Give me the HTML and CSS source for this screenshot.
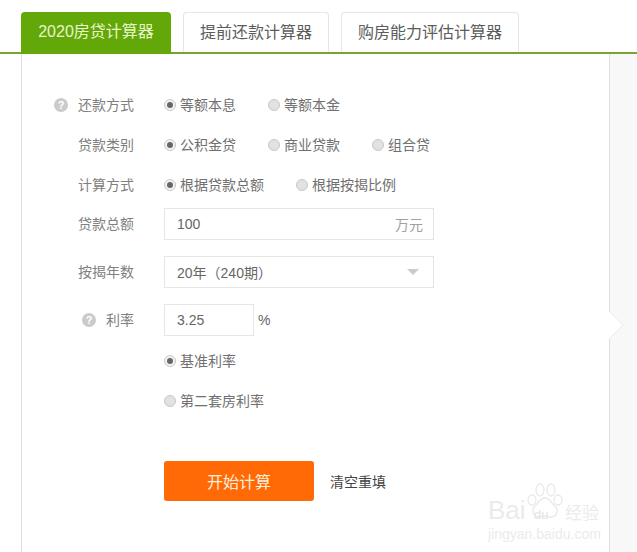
FILE: index.html
```html
<!DOCTYPE html>
<html lang="zh-CN">
<head>
<meta charset="utf-8">
<title>房贷计算器</title>
<link rel="stylesheet" href="styles.css">
</head>
<body>
<nav class="tabs">
  <a class="tab tab-active">2020房贷计算器</a>
  <a class="tab tab-second">提前还款计算器</a>
  <a class="tab tab-third">购房能力评估计算器</a>
</nav>
<div class="main">
  <section class="panel">
    <div class="row radio-row">
      <div class="label"><span class="help">?</span>还款方式</div>
      <div class="options">
        <span class="opt"><i class="radio on"></i>等额本息</span>
        <span class="opt"><i class="radio"></i>等额本金</span>
      </div>
    </div>
    <div class="row radio-row">
      <div class="label">贷款类别</div>
      <div class="options">
        <span class="opt"><i class="radio on"></i>公积金贷</span>
        <span class="opt"><i class="radio"></i>商业贷款</span>
        <span class="opt"><i class="radio"></i>组合贷</span>
      </div>
    </div>
    <div class="row radio-row">
      <div class="label">计算方式</div>
      <div class="options">
        <span class="opt"><i class="radio on"></i>根据贷款总额</span>
        <span class="opt"><i class="radio"></i>根据按揭比例</span>
      </div>
    </div>
    <div class="row field-row first-field">
      <div class="label">贷款总额</div>
      <div class="box box-wide"><span>100</span><span class="unit">万元</span></div>
    </div>
    <div class="row field-row">
      <div class="label">按揭年数</div>
      <div class="box box-wide"><span>20年（240期）</span><i class="caret"></i></div>
    </div>
    <div class="row field-row">
      <div class="label"><span class="help">?</span>利率</div>
      <div class="box box-small"><span>3.25</span></div>
      <span class="percent">%</span>
    </div>
    <div class="row radio-row after-field">
      <div class="label"></div>
      <div class="options"><span class="opt"><i class="radio on"></i>基准利率</span></div>
    </div>
    <div class="row radio-row">
      <div class="label"></div>
      <div class="options"><span class="opt"><i class="radio"></i>第二套房利率</span></div>
    </div>
    <div class="row actions">
      <div class="label"></div>
      <button class="submit" type="button">开始计算</button>
      <a class="reset">清空重填</a>
    </div>
  </section>
  <aside class="side"></aside>
  <svg class="chevron" width="16" height="30" viewBox="0 0 16 30" aria-hidden="true">
    <path d="M0 1 L14 15 L0 29 Z" fill="#fff"/>
    <path d="M0 1 L14 15 L0 29" fill="none" stroke="#ececec" stroke-width="1"/>
  </svg>
</div>
<div class="watermark">
  <svg class="paw" width="36" height="37" viewBox="0 0 36 37" aria-hidden="true">
    <g fill="#fff" stroke="#e9e9e9" stroke-width="1.3">
      <ellipse cx="13" cy="7" rx="4" ry="6"/>
      <ellipse cx="24" cy="7" rx="4" ry="6"/>
      <ellipse cx="5" cy="17" rx="4" ry="5"/>
      <ellipse cx="31" cy="17" rx="4" ry="5"/>
      <path d="M18 15c-5 0-6 5-10 8-4 4-2 11 4 11 3 0 4-1 6-1s3 1 6 1c6 0 8-7 4-11-4-3-5-8-10-8z"/>
    </g>
  </svg>
  <div class="wm-top"><span class="wm-bai">Bai</span><span class="wm-du">du</span><span class="wm-cn">经验</span></div>
  <div class="wm-url">jingyan.baidu.com</div>
</div>
</body>
</html>
```
FILE: styles.css
```css
* { box-sizing: border-box; }
html, body { margin: 0; height: 552px; overflow: hidden; background: #fff; }
body {
  position: relative;
  font-family: "Liberation Sans", "Noto Sans CJK SC", sans-serif;
  font-size: 14px;
  color: #666;
}
.tabs {
  display: flex;
  gap: 12px;
  height: 54px;
  padding: 12px 0 0 21px;
  border-bottom: 2px solid #7aa42f;
}
.tab {
  display: block;
  height: 40px;
  line-height: 40px;
  text-align: center;
  font-size: 16px;
  color: #5c5c5c;
  background: #fff;
  border: 1px solid #e6e6e6;
  border-bottom: 0;
  border-radius: 4px 4px 0 0;
}
.tab-active {
  width: 150px;
  height: 42px;
  color: #e9f6c8;
  background: #62a808;
  border: 0;
}
.tab-second { width: 146px; }
.tab-third { width: 178px; }
.main { display: flex; height: 498px; position: relative; }
.panel {
  width: 589px;
  margin-left: 21px;
  padding-top: 31px;
  background: #fff;
  border-left: 1px solid #dedede;
  border-right: 1px solid #dedede;
}
.side { flex: 1; background: #f8f8f8; }
.chevron { position: absolute; left: 609px; top: 256px; }
.row { display: flex; align-items: center; }
.radio-row { height: 40px; }
.field-row { height: 32px; margin-bottom: 16px; }
.first-field { margin-top: 3px; }
.after-field { margin-top: -11px; }
.label {
  width: 112px;
  flex: none;
  margin-right: 30px;
  display: flex;
  justify-content: flex-end;
  align-items: center;
  color: #808080;
  line-height: 20px;
}
.help {
  width: 14px;
  height: 14px;
  margin-right: 10px;
  border-radius: 50%;
  background: #cbcbcb;
  color: #fff;
  font: bold 11px/14px "Liberation Sans", sans-serif;
  text-align: center;
}
.options { display: flex; gap: 32px; }
.opt { display: flex; align-items: center; gap: 4px; line-height: 20px; color: #707070; }
.radio {
  position: relative;
  display: block;
  width: 12px;
  height: 12px;
  border-radius: 50%;
  border: 1px solid #c8c8c8;
  background: #e2e2e2;
}
.radio.on { background: #f2f2f2; }
.radio.on::after {
  content: "";
  position: absolute;
  left: 2px;
  top: 2px;
  width: 6px;
  height: 6px;
  border-radius: 50%;
  background: #666;
}
.box {
  display: flex;
  align-items: center;
  justify-content: space-between;
  height: 32px;
  padding: 0 10px 0 12px;
  border: 1px solid #e6e6e6;
  background: #fff;
  color: #666;
}
.box-wide { width: 270px; }
.box-small { width: 90px; }
.unit { color: #a0a0a0; }
.caret {
  width: 0;
  height: 0;
  margin-right: 4px;
  border-left: 6px solid transparent;
  border-right: 6px solid transparent;
  border-top: 6px solid #ccc;
}
.percent { margin-left: 4px; color: #666; }
.actions { margin-top: 40px; }
.submit {
  width: 150px;
  height: 40px;
  border: 0;
  border-radius: 3px;
  background: #ff6a06;
  color: #ffeedd;
  font: 16px "Noto Sans CJK SC", sans-serif;
}
.reset { margin-left: 16px; color: #444; }
.watermark {
  position: absolute;
  left: 488px;
  top: 483px;
  width: 120px;
  height: 64px;
  color: #ebebeb;
}
.paw { position: absolute; left: 39px; top: 0; }
.wm-top { position: absolute; left: 0; top: 12px; display: flex; align-items: baseline; font: 26px/30px "Liberation Sans", sans-serif; }
.wm-bai { width: 46px; }
.wm-du { width: 31px; font-size: 13px; color: #e4e4e4; }
.wm-cn { font: 17px/30px "Noto Sans CJK SC", sans-serif; }
.wm-url { position: absolute; left: 0; top: 43px; font: 14px/16px "Liberation Sans", sans-serif; white-space: nowrap; }
```
